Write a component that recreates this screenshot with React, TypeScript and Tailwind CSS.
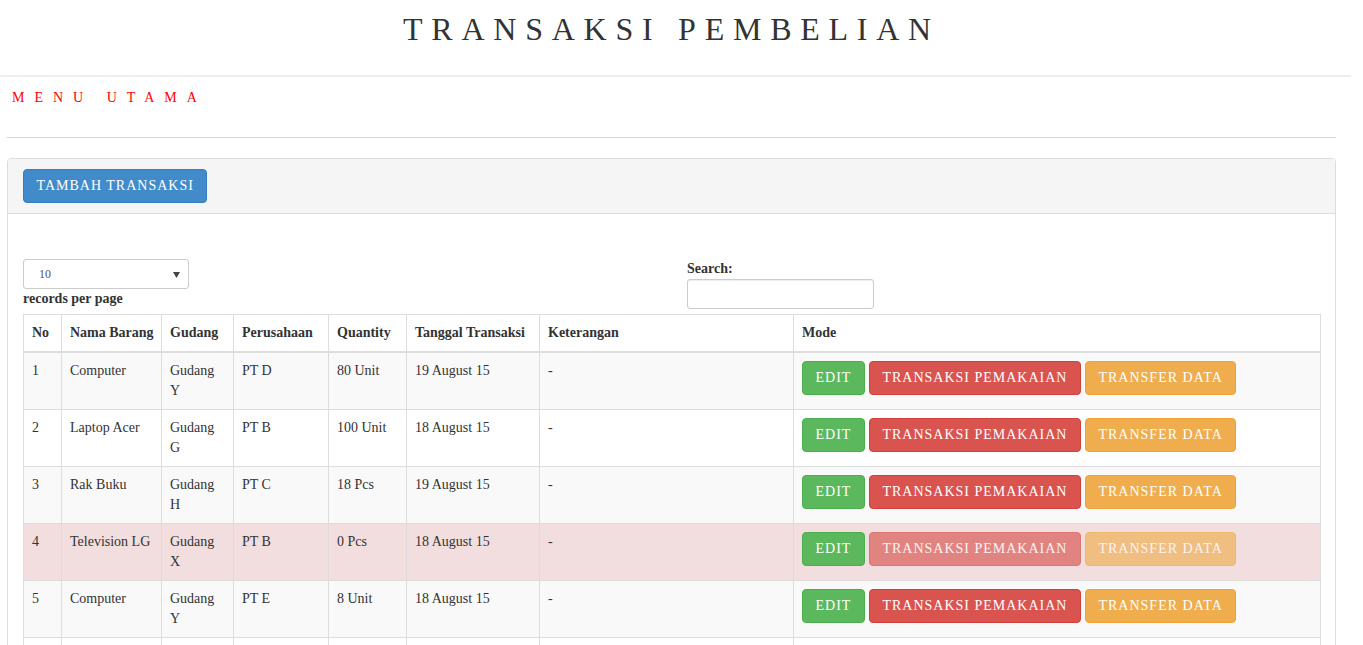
import React from 'react';

type Row = {
  no: number;
  nama: string;
  gudang: string;
  perusahaan: string;
  qty: string;
  tanggal: string;
  ket: string;
  habis?: boolean;
};

const rows: Row[] = [
  { no: 1, nama: 'Computer', gudang: 'Gudang Y', perusahaan: 'PT D', qty: '80 Unit', tanggal: '19 August 15', ket: '-' },
  { no: 2, nama: 'Laptop Acer', gudang: 'Gudang G', perusahaan: 'PT B', qty: '100 Unit', tanggal: '18 August 15', ket: '-' },
  { no: 3, nama: 'Rak Buku', gudang: 'Gudang H', perusahaan: 'PT C', qty: '18 Pcs', tanggal: '19 August 15', ket: '-' },
  { no: 4, nama: 'Television LG', gudang: 'Gudang X', perusahaan: 'PT B', qty: '0 Pcs', tanggal: '18 August 15', ket: '-', habis: true },
  { no: 5, nama: 'Computer', gudang: 'Gudang Y', perusahaan: 'PT E', qty: '8 Unit', tanggal: '18 August 15', ket: '-' },
];

const columns = [
  { label: 'No', width: 'w-[38px]' },
  { label: 'Nama Barang', width: 'w-[100px]' },
  { label: 'Gudang', width: 'w-[72px]' },
  { label: 'Perusahaan', width: 'w-[95px]' },
  { label: 'Quantity', width: 'w-[78px]' },
  { label: 'Tanggal Transaksi', width: 'w-[133px]' },
  { label: 'Keterangan', width: 'w-[254px]' },
  { label: 'Mode', width: 'w-[527px]' },
];

const btn =
  'inline-block rounded-[4px] border px-[12.5px] py-[6px] text-[14px] leading-[20px] tracking-[1px] text-white whitespace-nowrap';

function ModeButtons({ disabled }: { disabled?: boolean }) {
  return (
    <div className="flex gap-[4px]">
      <button className={`${btn} border-[#4cae4c] bg-[#5cb85c]`}>EDIT</button>
      <button
        className={`${btn} border-[#d43f3a] bg-[#d9534f] ${disabled ? 'opacity-[.65]' : ''}`}
        disabled={disabled}
      >
        TRANSAKSI PEMAKAIAN
      </button>
      <button
        className={`${btn} border-[#eea236] bg-[#f0ad4e] ${disabled ? 'opacity-[.65]' : ''}`}
        disabled={disabled}
      >
        TRANSFER DATA
      </button>
    </div>
  );
}

export default function App() {
  const td = 'border border-[#ddd] p-[8px] align-top';

  return (
    <div className="h-[645px] w-[1351px] overflow-hidden bg-white font-['Liberation_Serif',serif] text-[14px] leading-[20px] text-[#333]">
      <header className="h-[77px] border-b-2 border-[#eee] pt-[11px] text-center">
        <h1 className="pr-[8px] text-[32px] leading-[36px] tracking-[8.75px] text-[#333]">TRANSAKSI PEMBELIAN</h1>
      </header>

      <div className="ml-[7px] w-[1329px]">
        <nav className="h-[60px] pl-[5px] pt-[11px]">
          <a className="text-[14px] leading-[20px] tracking-[10px] text-[#ff0000]">MENU UTAMA</a>
        </nav>
        <hr className="mb-[20px] border-t border-[#d4d4d4]" />

        <div className="rounded-[4px] border border-[#ddd]">
          <div className="rounded-t-[3px] border-b border-[#ddd] bg-[#f5f5f5] px-[15px] py-[10px]">
            <button className={`${btn} border-[#357ebd] bg-[#428bca]`}>TAMBAH TRANSAKSI</button>
          </div>

          <div className="px-[15px] pb-[15px] pt-[45px]">
            <div className="flex">
              <div className="flex-1">
                <div className="relative h-[30px] w-[166px] rounded-[3px] border border-[#ccc] bg-white">
                  <span className="absolute left-[15px] top-[5px] text-[12px] leading-[18px] text-[#555]">10</span>
                  <svg className="absolute right-[8px] top-[12px]" width="7" height="6" viewBox="0 0 7 6">
                    <path d="M0 0h7L3.5 6z" fill="#444" />
                  </svg>
                </div>
                <div className="font-bold">records per page</div>
              </div>
              <div className="w-[633px]">
                <label className="block font-bold">Search:</label>
                <input className="h-[30px] w-[187px] rounded-[3px] border border-[#ccc] px-[10px] text-[12px] shadow-[inset_0_1px_1px_rgba(0,0,0,0.075)] outline-none" />
              </div>
            </div>

            <table className="mt-[5px] w-[1297px] table-fixed border-collapse border border-[#ddd]">
              <thead>
                <tr>
                  {columns.map((c) => (
                    <th
                      key={c.label}
                      className={`${c.width} whitespace-nowrap border border-b-2 border-[#ddd] p-[8px] text-left align-bottom font-bold`}
                    >
                      {c.label}
                    </th>
                  ))}
                </tr>
              </thead>
              <tbody>
                {rows.map((r, i) => (
                  <tr
                    key={r.no}
                    className={r.habis ? 'bg-[#f2dede]' : i % 2 === 0 ? 'bg-[#f9f9f9]' : 'bg-white'}
                  >
                    <td className={td}>{r.no}</td>
                    <td className={td}>{r.nama}</td>
                    <td className={td}>{r.gudang}</td>
                    <td className={td}>{r.perusahaan}</td>
                    <td className={td}>{r.qty}</td>
                    <td className={td}>{r.tanggal}</td>
                    <td className={td}>{r.ket}</td>
                    <td className={td}>
                      <ModeButtons disabled={r.habis} />
                    </td>
                  </tr>
                ))}
                <tr className="h-[57px] bg-white">
                  {columns.map((c) => (
                    <td key={c.label} className={td} />
                  ))}
                </tr>
              </tbody>
            </table>
          </div>
        </div>
      </div>
    </div>
  );
}
